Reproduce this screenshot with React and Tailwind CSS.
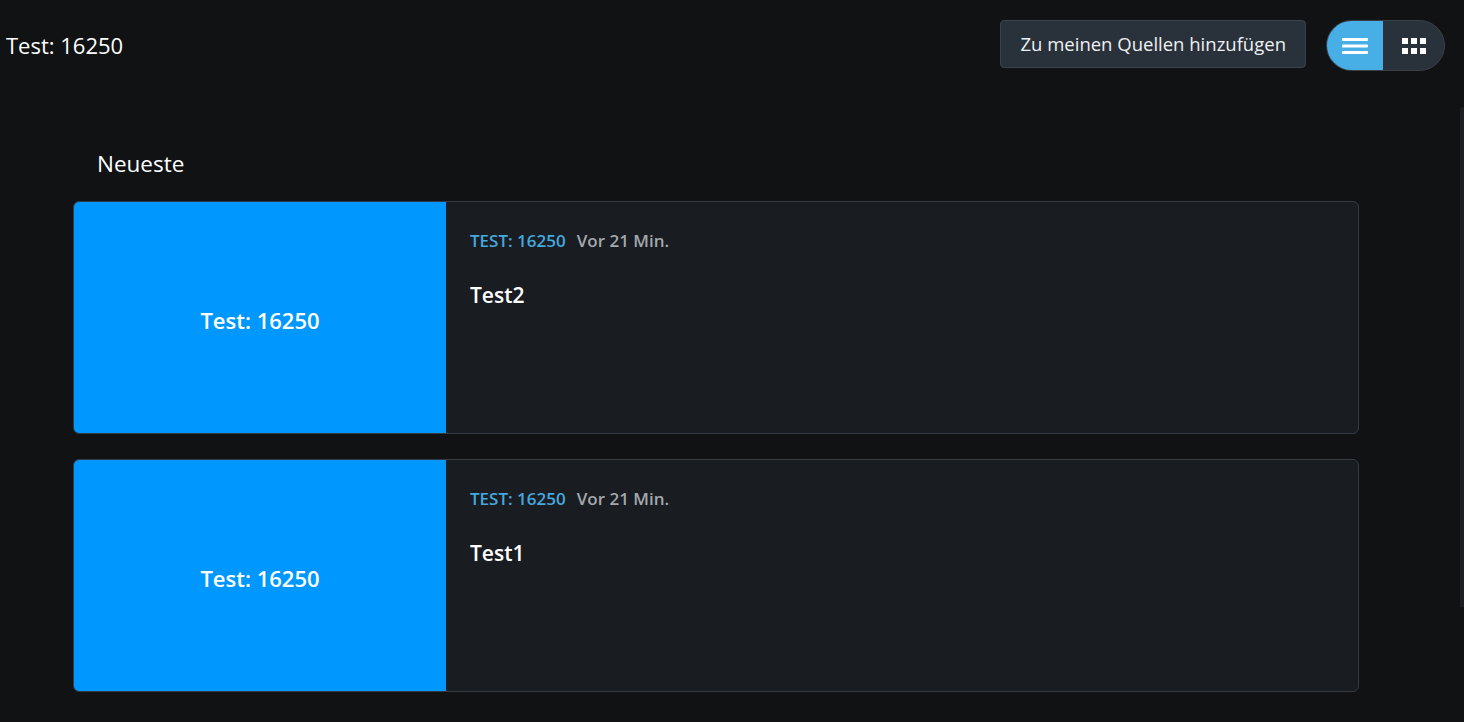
import React from "react";

function Card({ title }) {
  return (
    <div className="flex h-[233px] overflow-hidden rounded-md border border-[#363b43] bg-[#191c21]">
      <div className="flex w-[372px] shrink-0 items-center justify-center bg-[#0098ff] pt-[6px]">
        <span className="text-[22px] font-semibold text-white">Test: 16250</span>
      </div>
      <div className="flex flex-col pl-6 pt-[26px]">
        <div className="flex items-center gap-[11px] text-[17px] font-semibold">
          <span className="text-[#45a8de]">TEST: 16250</span>
          <span className="text-[#a3a7ad]">Vor 21 Min.</span>
        </div>
        <div className="mt-[26px] text-[21px] font-semibold text-white">{title}</div>
      </div>
    </div>
  );
}

export default function App() {
  return (
    <div
      className="relative min-h-[722px] w-full bg-[#111214] text-white"
      style={{ fontFamily: '"Open Sans", "Noto Sans", sans-serif' }}
    >
      <header className="flex items-start justify-between pl-[6px] pr-[19px] pt-[20px]">
        <div className="mt-[14px] text-[22px] leading-[22px]">Test: 16250</div>
        <div className="flex items-start gap-[20px]">
          <button className="flex h-[48px] items-center rounded border border-[#3a424c] bg-[#29313a] px-[19px] text-[18.5px] text-[#eef0f2]">
            Zu meinen Quellen hinzufügen
          </button>
          <div className="flex h-[51px] w-[119px] overflow-hidden rounded-full border border-[#3a4048] bg-[#29313a]">
            <div className="flex w-[56px] items-center justify-center bg-[#47afe6]">
              <svg width="26" height="18" viewBox="0 0 26 18">
                <rect x="0" y="1" width="26" height="3" rx="1" fill="white" />
                <rect x="0" y="7.5" width="26" height="3" rx="1" fill="white" />
                <rect x="0" y="14" width="26" height="3" rx="1" fill="white" />
              </svg>
            </div>
            <div className="flex flex-1 items-center justify-center">
              <svg width="24" height="16" viewBox="0 0 24 16">
                <rect x="0" y="0" width="6" height="6" fill="white" />
                <rect x="9" y="0" width="6" height="6" fill="white" />
                <rect x="18" y="0" width="6" height="6" fill="white" />
                <rect x="0" y="10" width="6" height="6" fill="white" />
                <rect x="9" y="10" width="6" height="6" fill="white" />
                <rect x="18" y="10" width="6" height="6" fill="white" />
              </svg>
            </div>
          </div>
        </div>
      </header>

      <main className="ml-[73px] w-[1286px] pt-[78px]">
        <h2 className="pl-[24px] text-[22.5px] leading-[30px]">Neueste</h2>
        <div className="mt-[22px] flex flex-col gap-[25px]">
          <Card title="Test2" />
          <Card title="Test1" />
        </div>
      </main>

      <div className="absolute right-0 top-[107px] h-[500px] w-[4px] rounded-tl bg-[#1e1f22]" />
    </div>
  );
}
